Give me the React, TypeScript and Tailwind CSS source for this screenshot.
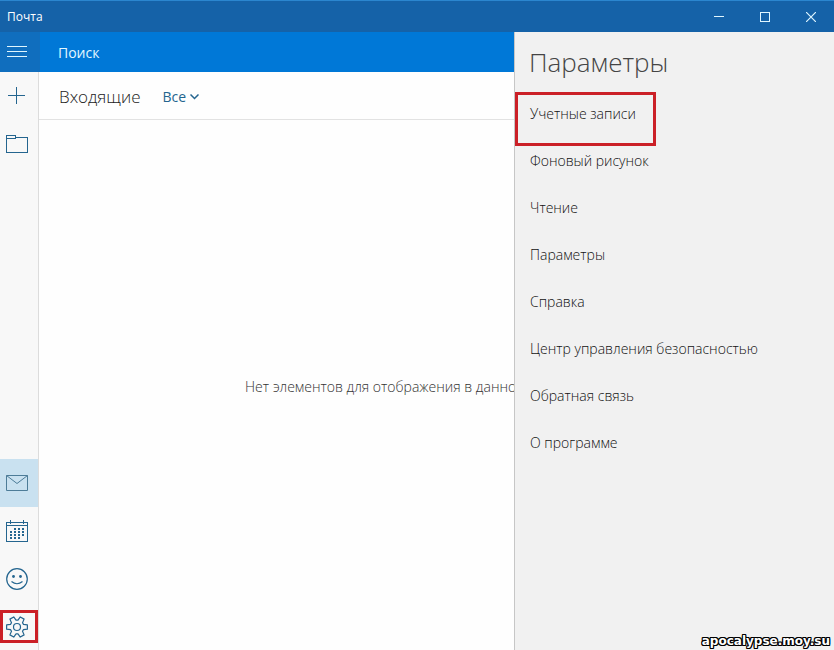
import React from 'react';

const menuItems = [
  'Учетные записи',
  'Фоновый рисунок',
  'Чтение',
  'Параметры',
  'Справка',
  'Центр управления безопасностью',
  'Обратная связь',
  'О программе',
];

const dotRows = [
  [8, 12, 16],
  [4, 8, 12, 16],
  [4, 8, 12, 16],
  [4, 8, 12],
];

const gearPath =
  [0, 60, 120, 180, 240, 300]
    .flatMap((tooth) =>
      [
        [-22, 7],
        [-12, 10.6],
        [12, 10.6],
        [22, 7],
      ].map(([offset, radius]) => {
        const angle = ((tooth + offset) * Math.PI) / 180;
        return `${(radius * Math.cos(angle)).toFixed(2)} ${(radius * Math.sin(angle)).toFixed(2)}`;
      }),
    )
    .map((point, i) => (i === 0 ? `M${point}` : `L${point}`))
    .join('') + 'Z';

function TitleBar() {
  return (
    <header className="flex h-8 shrink-0 items-center border-t border-[#2b86cf] bg-[#1562a8] text-white">
      <h1 className="flex-1 pl-[7px] text-[12px] leading-4">Почта</h1>
      <button aria-label="Свернуть" className="flex h-full w-[46px] items-center justify-center">
        <svg width="10" height="10" shapeRendering="crispEdges"><path d="M0 4.5H10" stroke="#dff6ff" /></svg>
      </button>
      <button aria-label="Развернуть" className="flex h-full w-[46px] items-center justify-center">
        <svg width="10" height="10" shapeRendering="crispEdges"><rect x="0.5" y="0.5" width="9" height="9" fill="none" stroke="#dff6ff" /></svg>
      </button>
      <button aria-label="Закрыть" className="flex h-full w-[46px] items-center justify-center">
        <svg width="10" height="10"><path d="M0 0L10 10M10 0L0 10" stroke="#dff6ff" strokeWidth="1.2" /></svg>
      </button>
    </header>
  );
}

function NavRail() {
  return (
    <nav className="flex w-[39px] shrink-0 flex-col border-r border-[#dcdcdc] bg-[#f8f8f8] text-[#24658f]">
      <button aria-label="Создать" className="flex h-12 items-center pb-[2px] pl-2">
        <svg width="17" height="17" shapeRendering="crispEdges" stroke="currentColor"><path d="M8.5 0V17M0 8.5H17" /></svg>
      </button>
      <button aria-label="Папки" className="flex h-12 items-center pl-[6px]">
        <svg width="22" height="18" fill="none" stroke="currentColor" shapeRendering="crispEdges">
          <path d="M0.5 17.5V0.5H9.5V2.5H21.5V17.5ZM0.5 3.5H9.5V2.5" />
        </svg>
      </button>
      <div className="flex-1" />
      <button aria-label="Почта" className="flex h-12 items-center bg-[#c9e1f0] pl-[6px] text-[#4d7c98]">
        <svg width="22" height="16" fill="none" stroke="currentColor">
          <path d="M0.5 0.5H21.5V15.5H0.5ZM0.5 0.5L11 8.5L21.5 0.5" />
        </svg>
      </button>
      <button aria-label="Календарь" className="flex h-12 items-center pl-[6px]">
        <svg width="22" height="22" fill="none" stroke="currentColor" shapeRendering="crispEdges">
          <path d="M0.5 2.5H21.5V21.5H0.5ZM0.5 5.5H21.5M4.5 0V4M17.5 0V4" />
          {dotRows.map((row, r) =>
            row.map((x) => <rect key={`${r}-${x}`} x={x} y={8 + r * 3} width="2" height="2" fill="currentColor" stroke="none" />),
          )}
        </svg>
      </button>
      <button aria-label="Отзыв" className="flex h-12 items-center pl-[6px]">
        <svg width="22" height="22" fill="none" stroke="currentColor" strokeWidth="1.2">
          <circle cx="11" cy="11" r="10.3" />
          <circle cx="7.5" cy="8.5" r="1.4" fill="currentColor" stroke="none" />
          <circle cx="14.5" cy="8.5" r="1.4" fill="currentColor" stroke="none" />
          <path d="M5.5 13.5Q11 18 16.5 13.5" />
        </svg>
      </button>
      <div className="flex h-[47px] items-center">
        <button aria-label="Параметры" className="flex h-[33px] w-[38px] items-center border-3 border-[#cb2027] pl-[3px]">
          <svg width="22" height="22" viewBox="-11 -11 22 22" fill="none" stroke="currentColor" strokeWidth="1.2" strokeLinejoin="round">
            <circle r="3.5" />
            <path d={gearPath} />
          </svg>
        </button>
      </div>
    </nav>
  );
}

function Mailbox() {
  return (
    <main className="flex min-w-0 flex-1 flex-col bg-[#fefefe]">
      <div className="flex h-12 shrink-0 items-center gap-[22px] border-b border-[#e2e2e2] pt-[3px] pl-5">
        <h2 className="text-[17px] leading-6 font-light text-[#222]">Входящие</h2>
        <button className="flex items-center gap-1 text-[14px] leading-5 text-[#24658f]">
          Все
          <svg width="9" height="6" fill="none" stroke="currentColor" strokeWidth="1.5"><path d="M0.5 0.5L4.5 4.5L8.5 0.5" /></svg>
        </button>
      </div>
      <div className="flex flex-1 items-center overflow-hidden pt-1 pl-[206px]">
        <p className="whitespace-nowrap text-[14px] leading-5 font-light text-[#333]">Нет элементов для отображения в данном</p>
      </div>
    </main>
  );
}

function SettingsPane() {
  return (
    <aside className="w-80 shrink-0 border-l border-[#c6c6c6] bg-[#f1f1f1] pt-3">
      <h2 className="pl-[14px] text-[26px] leading-9 font-light text-[#444]">Параметры</h2>
      <ul className="pt-[10px]">
        {menuItems.map((item, i) => (
          <li key={item} className="relative h-[47px]">
            <button className="h-[47px] w-full pl-[15px] text-left text-[14px] leading-5 font-light text-[#111]">{item}</button>
            {i === 0 && <span className="pointer-events-none absolute top-[2px] left-0 h-[54px] w-[141px] border-3 border-[#cb2027]" />}
          </li>
        ))}
      </ul>
    </aside>
  );
}

export default function App() {
  return (
    <div className="relative flex min-h-screen flex-col font-['Open_Sans','Noto_Sans',sans-serif]">
      <TitleBar />
      <div className="flex flex-1">
        <div className="flex min-w-0 flex-1 flex-col">
          <div className="flex h-10 shrink-0 bg-[#0078d7]">
            <button aria-label="Меню" className="flex w-10 items-center bg-[#106ebe] pl-[7px]">
              <svg width="20" height="12" stroke="#dff6ff" shapeRendering="crispEdges"><path d="M0 0.5H20M0 5.5H20M0 10.5H20" /></svg>
            </button>
            <input aria-label="Поиск" placeholder="Поиск" className="min-w-0 flex-1 bg-transparent pt-[2px] pl-[18px] text-[14px] leading-5 text-white outline-none placeholder:text-[#e2f7ff]" />
          </div>
          <div className="flex flex-1">
            <NavRail />
            <Mailbox />
          </div>
        </div>
        <SettingsPane />
      </div>
      <span className="absolute right-1 bottom-px font-['DejaVu_Sans',sans-serif] text-[12px] leading-4 font-bold text-white [text-shadow:1px_0_#000,-1px_0_#000,0_1px_#000,0_-1px_#000,1px_1px_#000,-1px_-1px_#000,1px_-1px_#000,-1px_1px_#000]">
        apocalypse.moy.su
      </span>
    </div>
  );
}
